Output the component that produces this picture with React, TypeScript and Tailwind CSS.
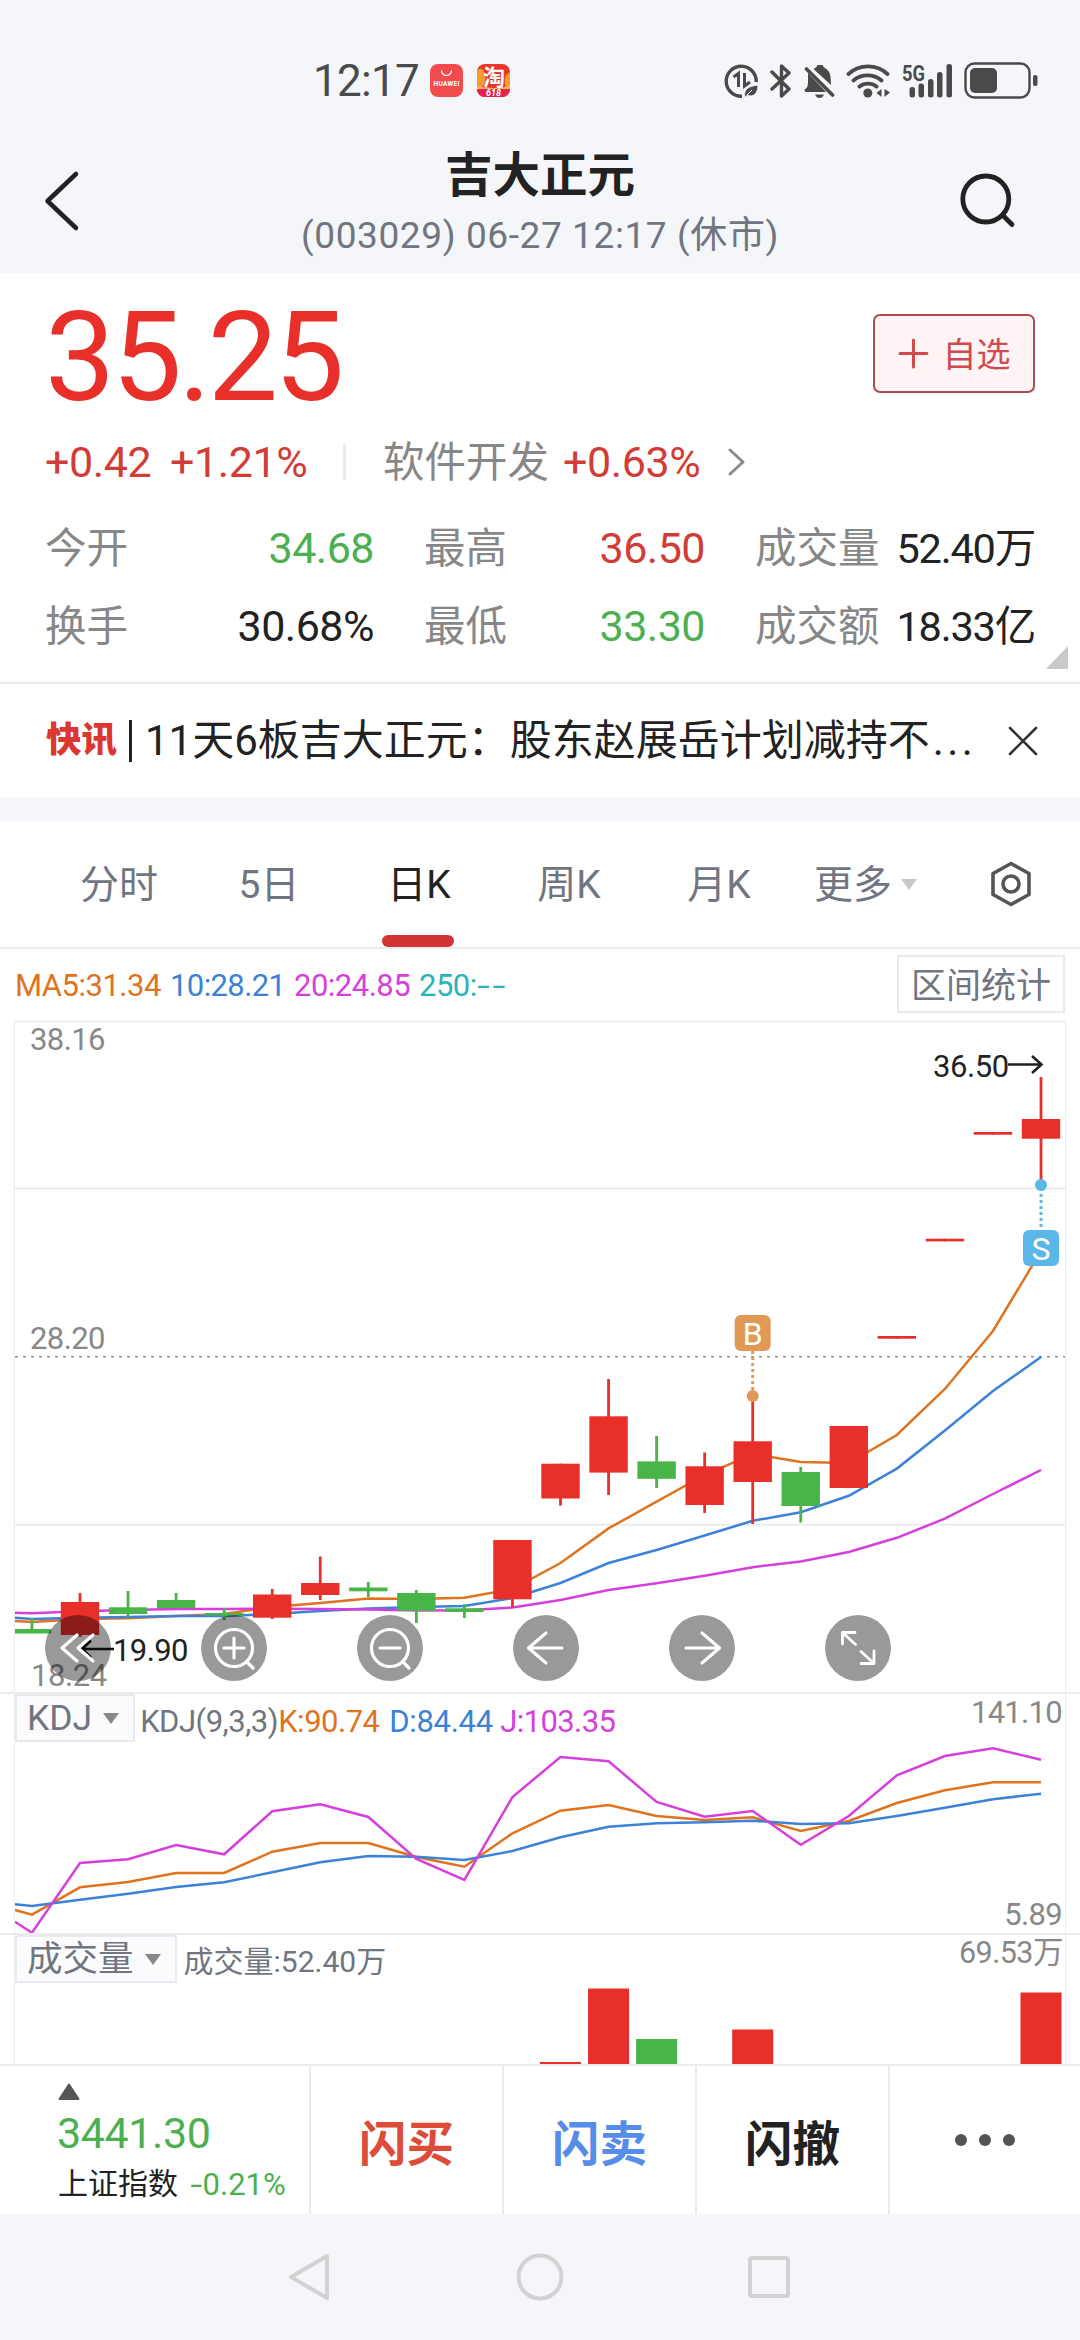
import { ReactNode } from 'react';

const RED = '#e82f2a';
const GREEN = '#48b549';
const ORANGE = '#e0731e';
const BLUE = '#3c82d6';
const PINK = '#d63fdc';

const STEP = 48.05;
const LAST_X = 1041;

type Candle = {
  up: boolean;
  top: number;
  bottom: number;
  high: number;
  low: number;
};

const c = (up: boolean, top: number, bottom: number, high: number, low: number): Candle => ({
  up,
  top,
  bottom,
  high,
  low,
});

// 가격 패널 좌표 (패널 상단 = 0)
const candles: Candle[] = [
  c(false, 609, 613.5, 598, 613),
  c(true, 582, 615, 573, 617),
  c(false, 587.3, 594, 571, 597),
  c(false, 580, 588, 573, 588),
  c(false, 593, 595.5, 588, 600),
  c(true, 574.5, 597.7, 569, 599),
  c(true, 563, 575, 536.5, 580),
  c(false, 567.5, 571.3, 562, 577),
  c(false, 573, 591, 570, 603),
  c(false, 588.3, 592, 584, 598),
  c(true, 520, 579.3, 520, 587.7),
  c(true, 443.7, 478.5, 443.7, 485.6),
  c(true, 396.3, 452.6, 359, 475),
  c(false, 441.4, 458.8, 416, 468),
  c(true, 446.3, 485, 432.5, 493),
  c(true, 421.3, 462, 377, 504),
  c(false, 452, 486, 447, 502.5),
  c(true, 406, 468, 406, 468),
  c(true, 316, 318.7, 316, 318.7),
  c(true, 218.7, 221.4, 218.7, 221.4),
  c(true, 112, 114.7, 112, 114.7),
  c(true, 99, 118.7, 57, 160),
];

// 첫 번째 값은 왼쪽 프레임과 만나는 지점
const ma5 = [601, 602, 599, 598.3, 596, 594, 587, 583, 578.5, 579, 577.7, 569, 543, 508.4, 481.6, 455, 434, 442, 443, 415, 369, 311, 231];
const ma10 = [597.7, 599, 597.7, 597, 596, 596, 594, 591, 588.6, 587, 586, 578, 563, 543, 530, 515.5, 500.8, 492.3, 475.8, 448.6, 410.6, 371, 337];
const ma20 = [592.7, 593.2, 591.3, 590, 589, 589, 588.8, 589, 589.5, 590.5, 590.3, 587.5, 580, 570, 563.3, 555.7, 547.2, 541.4, 532, 517.8, 498.6, 474, 450];

const kLine = [217, 221.7, 194.3, 189, 180, 180, 158.7, 150, 150, 164, 173.7, 140.3, 117.7, 112, 123, 127, 124.3, 138, 128, 110, 97.3, 89.3, 89.3];
const dLine = [211.3, 213, 206.7, 200.7, 194, 189.3, 179.3, 169.3, 163, 163.7, 167, 158, 144.3, 133.7, 130.3, 129.3, 127.7, 131, 130.3, 123, 114.7, 106.3, 100.7];
const jLine = [228.7, 239.7, 170, 166.3, 152, 161.3, 118.3, 111.3, 124, 166, 187, 104, 64, 68.3, 109, 123.7, 118, 151.7, 123, 82.3, 63, 55.3, 66.7];

const volumes = [
  { index: 11, top: 129, up: true },
  { index: 12, top: 55.5, up: true },
  { index: 13, top: 106, up: false },
  { index: 15, top: 96.5, up: true },
  { index: 21, top: 59.5, up: true },
];

const xAt = (i: number) => LAST_X - (21 - i) * STEP;

const toPoints = (values: number[]) =>
  values.map((v, i) => `${i === 0 ? 15 : xAt(i - 1)},${v}`).join(' ');

function Line({ values, color }: { values: number[]; color: string }) {
  return <polyline points={toPoints(values)} fill="none" stroke={color} strokeWidth="2.5" />;
}

function StatusBar() {
  return (
    <div className="flex h-[128px] items-start pt-[60px] pl-[313px] text-[#4a4a4a]">
      <div className="flex h-[42px] w-[117px] items-center text-[44px] leading-none tracking-[-0.7px]">
        12:17
      </div>
      <svg className="mt-1" width="33" height="33" viewBox="0 0 33 33">
        <rect width="33" height="33" rx="8" fill="#f24b4e" />
        <path d="M11.5 6.5a5 5 0 0 0 10 0" fill="none" stroke="#fff" strokeWidth="1.2" />
        <text x="16.5" y="21.5" fontSize="6.6" fontWeight="700" fill="#fff" textAnchor="middle" textLength="26">
          HUAWEI
        </text>
      </svg>
      <svg className="mt-1 ml-[14px]" width="33" height="33" viewBox="0 0 33 33">
        <defs>
          <clipPath id="tao">
            <rect width="33" height="33" rx="8" />
          </clipPath>
        </defs>
        <g clipPath="url(#tao)">
          <rect width="33" height="33" fill="#e8362a" />
          <path d="M0 6Q6 2 8 10T4 24H0zM33 8Q25 12 29 24h4z" fill="#f79a2d" />
          <path d="M0 22q16 4 33 0v4H0z" fill="#f9b45a" />
          <rect y="25" width="33" height="8" fill="#e8214f" />
        </g>
        <text x="17" y="20.5" fontSize="22" fontWeight="700" fill="#fff" textAnchor="middle">
          淘
        </text>
        <text x="16.5" y="32" fontSize="9" fontWeight="700" fontStyle="italic" fill="#fff" textAnchor="middle">
          618
        </text>
      </svg>

      {/* 오른쪽 상태 아이콘 */}
      <svg className="mt-[3px] ml-[214px]" width="35" height="36" viewBox="0 0 35 36" fill="none" stroke="currentColor">
        <path d="M18 33.2A15 15 0 1 1 32.2 19" strokeWidth="3.4" />
        <path d="M9.5 14l5-3.5V24M20.5 10v13l5.5-4" strokeWidth="3" />
        <path d="M21 34c-2-8 4-11 13-12 0 9-5 13-11 10l5-5" fill="currentColor" stroke="#f5f6fa" strokeWidth="1" />
      </svg>
      <svg className="mt-[3px] ml-[11px]" width="22" height="36" viewBox="0 0 22 36" fill="none" stroke="currentColor" strokeWidth="3.4" strokeLinejoin="round" strokeLinecap="round">
        <path d="M2 9l17 17-7.5 7V3l7.5 7L2 26" />
      </svg>
      <svg className="mt-[3px] ml-[12px]" width="31" height="36" viewBox="0 0 31 36" fill="currentColor">
        <path d="M11 5q2-1 2.5-3h5q.5 2 2.5 3 5 3 5.5 9l.5 8L9.5 6zM4 10L22 29H1.5q-2-2 0-3 2.5-2 2.5-6zM11 31.5h9q-1.5 3.5-4.5 3.5t-4.5-3.5z" />
        <path d="M2.5 6L28.5 32" stroke="currentColor" strokeWidth="3.6" strokeLinecap="round" />
      </svg>
      <svg className="mt-[3px] ml-[11px]" width="45" height="36" viewBox="0 0 45 36" fill="none" stroke="currentColor" strokeWidth="3.8" strokeLinecap="round">
        <path d="M2.5 11a29 29 0 0 1 39 0M7.5 17.5a22 22 0 0 1 28 0M13.5 23.5a14 14 0 0 1 17 0" />
        <circle cx="21.8" cy="30" r="4.5" fill="currentColor" stroke="none" />
        <path d="M35.5 26v8l-5-4zM38.5 34v-8l5.5 3.5z" fill="currentColor" stroke="none" />
      </svg>
      <svg className="mt-[3px] ml-[11px] overflow-visible" width="52" height="36" viewBox="0 0 52 36" fill="currentColor">
        <text x="0" y="18" fontSize="22.5" fontWeight="700" textLength="23" lengthAdjust="spacingAndGlyphs">
          5G
        </text>
        <rect x="7.5" y="24" width="5.5" height="10.5" rx="2.5" />
        <rect x="16.5" y="20.5" width="5.5" height="14" rx="2.5" />
        <rect x="26" y="16" width="5.5" height="18.5" rx="2.5" />
        <rect x="35" y="9" width="5.5" height="25.5" rx="2.5" />
        <rect x="44.5" y="1" width="5.5" height="33.5" rx="2.5" />
      </svg>
      <svg className="mt-[2px] ml-[10px]" width="74" height="38" viewBox="0 0 74 38" fill="currentColor">
        <rect x="1.5" y="1.5" width="64" height="34" rx="9" fill="none" stroke="currentColor" strokeWidth="2.4" />
        <rect x="6" y="6" width="27" height="25" rx="5" />
        <rect x="69" y="13" width="4.5" height="11" rx="2" />
      </svg>
    </div>
  );
}

function Header() {
  return (
    <header className="flex h-[145px] justify-between">
      <svg className="mt-[40px] mr-[40px] ml-[42px]" width="40" height="66" viewBox="0 0 40 66" fill="none" stroke="#222" strokeWidth="4.5" strokeLinecap="round" strokeLinejoin="round">
        <path d="M34 6L5.500 33 34 60" />
      </svg>
      <div className="flex flex-col items-center pt-[23px]">
        <h1 className="text-[47.5px] leading-[50px] font-bold text-[#222]">吉大正元</h1>
        <div className="mt-[15px] text-[37px] leading-[40px] tracking-[0.6px] whitespace-nowrap text-[#70757f]">
          (003029) 06-27 12:17 (休市)
        </div>
      </div>
      <svg className="mt-[43px] mr-[62px]" width="60" height="60" viewBox="0 0 60 60" fill="none" stroke="#222" strokeWidth="4.8" strokeLinecap="round">
        <circle cx="27.8" cy="28" r="23" />
        <path d="M45.500 45l8.5 8.5" />
      </svg>
    </header>
  );
}

function Stat({ label, value, className = 'text-[#222]' }: { label: string; value: string; className?: string }) {
  return (
    <div className="flex items-center justify-between text-[43px] tracking-[-0.5px] whitespace-nowrap">
      <span className="pt-[2px] text-[41.5px] tracking-normal text-[#878787]">{label}</span>
      <span className={className}>{value}</span>
    </div>
  );
}

function Quote() {
  return (
    <section className="relative h-[411px] border-b-2 border-[#ebebed] bg-white pr-[45px] pl-[45px] leading-none">
      <div className="flex h-[150px] items-start justify-between">
        <div className="pt-[22px] text-[125px] leading-none tracking-[-3.6px] text-[#e82f2a]">35.25</div>
        <button className="mt-[41px] flex h-[79px] w-[162px] items-center justify-center gap-[14px] rounded-[7px] border-2 border-[#b0484c] bg-[#fef4f5] text-[34px] leading-none text-[#cf4b4f]">
          <svg width="31" height="31" viewBox="0 0 31 31" stroke="currentColor" strokeWidth="3" strokeLinecap="round">
            <path d="M2 15.5h27M15.5 2v27" />
          </svg>
          <span className="pt-[2px]">自选</span>
        </button>
      </div>
      <div className="flex h-[78px] items-center text-[43px] tracking-[-0.4px] whitespace-nowrap text-[#d23c36]">
        <span className="w-[125px]">+0.42</span>
        <span className="w-[173px]">+1.21%</span>
        <span className="h-9 w-[3px] bg-[#e9eaed]" />
        <span className="ml-[37px] w-[180px] pt-[2px] text-[41.5px] tracking-normal text-[#878787]">软件开发</span>
        <span className="w-[163px]">+0.63%</span>
        <svg width="20" height="30" viewBox="0 0 20 30" fill="none" stroke="#8a8a8a" strokeWidth="3" strokeLinecap="round" strokeLinejoin="round">
          <path d="M4 3l13 12L4 27" />
        </svg>
      </div>
      <div className="mt-[8px] grid grid-cols-[329px_281px_280px] grid-rows-[78px_78px] gap-x-[50px]">
        <Stat label="今开" value="34.68" className="text-[#4caf50]" />
        <Stat label="最高" value="36.50" className="text-[#d23c36]" />
        <Stat label="成交量" value="52.40万" className="pt-px text-[41.5px] tracking-[-1.2px] text-[#222]" />
        <Stat label="换手" value="30.68%" />
        <Stat label="最低" value="33.30" className="text-[#4caf50]" />
        <Stat label="成交额" value="18.33亿" className="pt-px text-[41.5px] tracking-[-1.2px] text-[#222]" />
      </div>
      <svg className="absolute right-[12px] bottom-[13px]" width="22" height="23" viewBox="0 0 22 23">
        <path d="M22 0v23H0z" fill="#c9c9c9" />
      </svg>
    </section>
  );
}

function News() {
  return (
    <section className="flex h-[113px] items-center bg-white pl-[46px] text-[42px] leading-none whitespace-nowrap text-[#222]">
      <span className="w-[83px] text-[35.5px] font-black text-[#db3630]">快讯</span>
      <span className="h-[42px] w-[3px] bg-[#222]" />
      <span className="ml-[13px] w-[863px] pt-px">
        11天6板吉大正元：股东赵展岳计划减持不<span className="ml-[3px] tracking-[3.4px]">...</span>
      </span>
      <svg width="30" height="30" viewBox="0 0 30 30" stroke="#333" strokeWidth="2.6" strokeLinecap="round">
        <path d="M2 2l26 26M28 2L2 28" />
      </svg>
    </section>
  );
}

function Tabs() {
  const tabs = ['分时', '5日', '日K', '周K', '月K'];
  return (
    <nav className="mt-6 flex h-[128px] border-b-2 border-[#ebebed] bg-white pl-[44px] text-[39px] leading-none text-[#70757f]">
      {tabs.map((tab) => (
        <div
          key={tab}
          className={`relative flex h-[126px] w-[150px] items-center justify-center pt-[2px] ${tab === '日K' ? 'text-[#222]' : ''}`}
        >
          {tab}
          {tab === '日K' && <span className="absolute bottom-0 left-[38px] h-3 w-[72px] rounded-full bg-[#d23335]" />}
        </div>
      ))}
      <div className="flex w-[174px] items-center pl-[20px]">
        <span className="pt-[2px]">更多</span>
        <svg className="ml-[9px]" width="16" height="11" viewBox="0 0 16 11">
          <path d="M0 0h16L8 11z" fill="#c8c8c8" />
        </svg>
      </div>
      <svg className="mt-[39px] ml-[21px]" width="44" height="48" viewBox="0 0 44 48" fill="none" stroke="#555" strokeWidth="3.6" strokeLinejoin="round">
        <path d="M22 3.5L40 13.5v21L22 44.5 4 34.5v-21z" />
        <circle cx="22" cy="24" r="8" />
      </svg>
    </nav>
  );
}

function MaLegend() {
  return (
    <div className="flex h-[71px] justify-between pr-[15px] pl-[15px] text-[31px] leading-none whitespace-nowrap">
      <div className="flex h-[72px] items-center tracking-[-0.5px]">
        <span className="w-[155px] text-[#e0731e]">MA5:31.34</span>
        <span className="w-[124px] tracking-[-0.6px] text-[#3c82d6]">10:28.21</span>
        <span className="w-[125px] text-[#d63fdc]">20:24.85</span>
        <span className="text-[#2bb3ba]">
          250:<span className="inline-block origin-left scale-x-150 tracking-[1.8px]">--</span>
        </span>
      </div>
      <div className="mt-[6px] flex h-[58px] w-[168px] items-center justify-center border-2 border-[#e9eaec] pt-[4px] text-[35px] text-[#70757f]">
        区间统计
      </div>
    </div>
  );
}

function RoundButton({ children }: { children: ReactNode }) {
  return (
    <button className="flex size-[66px] items-center justify-center rounded-full bg-black/40">
      <svg width="66" height="66" viewBox="0 0 66 66" fill="none" stroke="#fff" strokeWidth="3.2" strokeLinecap="round" strokeLinejoin="round">
        {children}
      </svg>
    </button>
  );
}

function PriceChart() {
  return (
    <div className="relative h-[672px]">
      <svg className="overflow-visible" width="1080" height="672" viewBox="0 0 1080 672" fontSize="31">
        <path d="M14 1.5H1066" stroke="#ececee" strokeWidth="1.5" />
        <path d="M15 168.5H1065M15 504.8H1065" stroke="#ececee" strokeWidth="2" />
        <path d="M15 336.8H1065" stroke="#8e8e8e" strokeWidth="1.5" strokeDasharray="3 5" />
        <text x="30" y="30" fill="#888" letterSpacing="-0.6">38.16</text>
        <text x="30" y="329" fill="#888" letterSpacing="-0.6">28.20</text>
        <text x="31" y="666" fill="#888" letterSpacing="-0.4">18.24</text>
        <Line values={ma5} color={ORANGE} />
        <Line values={ma10} color={BLUE} />
        <Line values={ma20} color={PINK} />
        {candles.map((item, i) => {
          const color = item.up ? RED : GREEN;
          const left = Math.max(xAt(i) - 19.2, 15);
          return (
            <g key={i} fill={color}>
              <rect x={xAt(i) - 1.4} y={item.high} width="2.8" height={item.low - item.high} />
              <rect x={left} y={item.top} width={xAt(i) + 19.2 - left} height={item.bottom - item.top} />
            </g>
          );
        })}
        <text x="933" y="57" fill="#222" letterSpacing="-0.4">36.50</text>
        <path d="M1008 44.5h33M1032 36l9.5 8.5-9.5 8.5" fill="none" stroke="#222" strokeWidth="2.6" />
        <text x="113" y="641" fill="#222" letterSpacing="-0.6">19.90</text>
        <path d="M114 629H82M91 620.5l-9 8.5 9 8.5" fill="none" stroke="#111" strokeWidth="2.6" />

        {/* 매수 / 매도 표시 */}
        <path d="M752.7 331v43" stroke="#e09a55" strokeWidth="3" strokeDasharray="3 3" />
        <circle cx="752.7" cy="376" r="6" fill="#e09a55" />
        <rect x="734.7" y="295" width="36" height="36" rx="6" fill="#e09a55" />
        <text x="752.7" y="324.5" fontSize="32" fill="#fff" textAnchor="middle">B</text>
        <path d="M1041 168v43" stroke="#5bb7e8" strokeWidth="3" strokeDasharray="3 3" />
        <circle cx="1041" cy="165" r="6" fill="#5bb7e8" />
        <rect x="1023" y="210" width="36" height="36" rx="6" fill="#5bb7e8" />
        <text x="1041" y="240" fontSize="32" fill="#fff" textAnchor="middle">S</text>
      </svg>
      <div className="absolute top-[595px] left-[45px] flex gap-[90px]">
        <RoundButton>
          <path d="M32 20L17 33l15 13M48 20L33 33l15 13" />
        </RoundButton>
        <RoundButton>
          <circle cx="33" cy="33" r="18.5" />
          <path d="M33 23v20M23 33h20M46 47l6 6" />
        </RoundButton>
        <RoundButton>
          <circle cx="33" cy="33" r="18.5" />
          <path d="M23 33h20M46 47l6 6" />
        </RoundButton>
        <RoundButton>
          <path d="M49 33H16M33 18L15.5 33 33 48" />
        </RoundButton>
        <RoundButton>
          <path d="M17 33h33M33 18l17.5 15L33 48" />
        </RoundButton>
        <RoundButton>
          <path d="M17.5 29V17.5H30M17.5 17.5l13 12M49 36v12.5H36M49 48.5l-13-12" strokeWidth="2.8" />
        </RoundButton>
      </div>
    </div>
  );
}

function Selector({ name }: { name: string }) {
  return (
    <div className="flex h-[48px] items-center border-2 border-[#e9eaee] bg-[#fbfbfd] pr-[14px] pl-[10px] text-[35.5px]">
      <span className="pt-[2px]">{name}</span>
      <svg className="ml-[11px]" width="16" height="11" viewBox="0 0 16 11">
        <path d="M0 0h16L8 11z" fill="#888" />
      </svg>
    </div>
  );
}

function KdjChart() {
  return (
    <div className="relative h-[241px] border-t-2 border-[#ececee]">
      <svg className="absolute -top-px left-0" width="1080" height="241" viewBox="0 0 1080 241">
        <Line values={kLine} color={ORANGE} />
        <Line values={dLine} color={BLUE} />
        <Line values={jLine} color={PINK} />
      </svg>
      <div className="relative flex h-full justify-between pr-[18px] pl-[15px] text-[31px] leading-none whitespace-nowrap text-[#70757f]">
        <div className="flex h-[48px] items-center">
          <Selector name="KDJ" />
          <span className="mt-[6px] ml-[5px] w-[138px] tracking-[-0.5px]">KDJ(9,3,3)</span>
          <span className="mt-[6px] w-[111px] tracking-[-0.5px] text-[#e0731e]">K:90.74</span>
          <span className="mt-[6px] w-[111px] tracking-[-0.3px] text-[#3c82d6]">D:84.44</span>
          <span className="mt-[6px] tracking-[-0.6px] text-[#d63fdc]">J:103.35</span>
        </div>
        <div className="flex flex-col items-end justify-between pt-[3px] pb-[3px] tracking-[-0.7px] text-[#888]">
          <span>141.10</span>
          <span>5.89</span>
        </div>
      </div>
    </div>
  );
}

function VolumeChart() {
  return (
    <div className="relative h-[131px] border-t-2 border-[#ececee]">
      <svg className="absolute -top-[2px] left-0" width="1080" height="131" viewBox="0 0 1080 131">
        {volumes.map((v) => (
          <rect key={v.index} x={xAt(v.index) - 20.5} y={v.top} width="41" height={131 - v.top} fill={v.up ? RED : GREEN} />
        ))}
      </svg>
      <div className="relative flex justify-between pr-[17px] pl-[15px] text-[30.5px] leading-none whitespace-nowrap text-[#70757f]">
        <div className="flex h-[48px] items-center">
          <Selector name="成交量" />
          <span className="mt-[6px] ml-[7px] text-[30px]">成交量:52.40万</span>
        </div>
        <span className="pt-[3px] tracking-[-0.5px] text-[#888]">69.53万</span>
      </div>
    </div>
  );
}

function BottomBar() {
  return (
    <footer className="flex h-[150px] border-t-2 border-[#ebebed] bg-white leading-none whitespace-nowrap">
      <div className="flex w-[309px] flex-col pl-[58px]">
        <svg className="mt-[17px]" width="22" height="18" viewBox="0 0 22 18">
          <path d="M11 1.5L20.5 16h-19z" fill="#555" stroke="#555" strokeWidth="2" strokeLinejoin="round" />
        </svg>
        <div className="mt-[11px] -ml-px text-[43px] tracking-[-0.4px] text-[#4caf50]">3441.30</div>
        <div className="mt-[14px] flex text-[30px] text-[#222]">
          上证指数
          <span className="ml-[14px] text-[31px] text-[#4caf50]">
            <span className="mr-[2px] inline-block scale-x-140">-</span>0.21%
          </span>
        </div>
      </div>
      <button className="flex w-[193px] items-center justify-center border-l-2 border-[#ebebef] pt-[12px] text-[47.5px] font-bold text-[#dc4c39]">
        闪买
      </button>
      <button className="flex w-[193px] items-center justify-center border-l-2 border-[#ebebef] pt-[12px] text-[47.5px] font-bold text-[#568deb]">
        闪卖
      </button>
      <button className="flex w-[193px] items-center justify-center border-l-2 border-[#ebebef] pt-[12px] text-[47.5px] font-bold text-[#222]">
        闪撤
      </button>
      <div className="flex flex-1 items-center justify-center gap-3 border-l-2 border-[#ebebef]">
        <span className="size-3 rounded-full bg-[#555]" />
        <span className="size-3 rounded-full bg-[#555]" />
        <span className="size-3 rounded-full bg-[#555]" />
      </div>
    </footer>
  );
}

function SystemNav() {
  return (
    <div className="flex h-[126px] items-center pl-[285px]">
      <svg width="48" height="52" viewBox="0 0 48 52" fill="none" stroke="#d2d2d2" strokeWidth="4" strokeLinejoin="round">
        <path d="M42 5v42L6 26z" />
      </svg>
      <svg className="ml-[181px]" width="52" height="52" viewBox="0 0 52 52" fill="none" stroke="#d2d2d2" strokeWidth="4">
        <circle cx="26" cy="26" r="21.5" />
      </svg>
      <div className="ml-[182px] size-[42px] rounded-[4px] border-4 border-[#d2d2d2]" />
    </div>
  );
}

export default function App() {
  return (
    <div className="h-[2340px] w-[1080px] overflow-hidden bg-[#f5f6fa] font-['Roboto','Noto_Sans_CJK_SC',sans-serif]">
      <StatusBar />
      <Header />
      <Quote />
      <News />
      <Tabs />
      <main className="relative bg-white">
        <MaLegend />
        <PriceChart />
        <KdjChart />
        <VolumeChart />
        <div className="absolute top-[72px] bottom-0 left-[14px] w-[1052px] border-x-[1.5px] border-[#ececee]" />
      </main>
      <BottomBar />
      <SystemNav />
    </div>
  );
}
